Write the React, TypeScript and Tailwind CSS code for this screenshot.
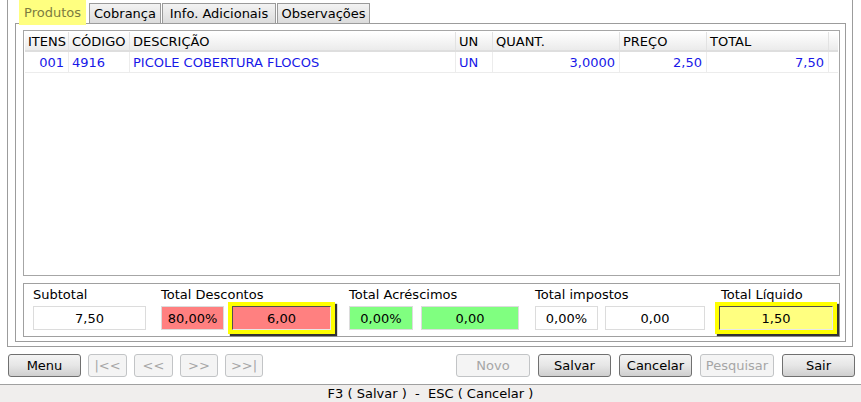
const TABS = [
  { label: "Cobrança", w: "w-[72px]" },
  { label: "Info. Adicionais", w: "w-[114px]" },
  { label: "Observações", w: "w-[93px]" },
];

const COLS = [
  { head: "ITENS", value: "001", w: "w-[44px]", right: true },
  { head: "CÓDIGO", value: "4916", w: "w-[61px]", right: false },
  { head: "DESCRIÇÃO", value: "PICOLE COBERTURA FLOCOS", w: "w-[326px]", right: false },
  { head: "UN", value: "UN", w: "w-[37px]", right: false },
  { head: "QUANT.", value: "3,0000", w: "w-[127px]", right: true },
  { head: "PREÇO", value: "2,50", w: "w-[87px]", right: true },
  { head: "TOTAL", value: "7,50", w: "w-[122px]", right: true },
];

function Field({ value, className }: { value: string; className: string }) {
  return (
    <div
      className={`h-[24px] flex items-center justify-center border border-[#dcdcdc] leading-none ${className}`}
    >
      {value}
    </div>
  );
}

function Highlight({ value, className, width }: { value: string; className: string; width: string }) {
  return (
    <div className={`${width} h-[32px] border-4 border-[#ffff00] shadow-[2px_2px_1px_#333]`}>
      <div
        className={`h-full flex items-center justify-center border-t border-l border-t-[#505050] border-l-[#505050] border-r border-b border-r-[#e8e8e8] border-b-[#e8e8e8] leading-none ${className}`}
      >
        {value}
      </div>
    </div>
  );
}

function Btn({ label, w, disabled }: { label: string; w: string; disabled?: boolean }) {
  return (
    <div
      className={
        disabled
          ? `${w} h-[23px] flex items-center justify-center rounded-[3px] border border-[#c2c4c6] bg-[#f4f4f4] text-[#a6a6a6]`
          : `${w} h-[23px] flex items-center justify-center rounded-[3px] border border-[#707070] bg-gradient-to-b from-[#f4f4f4] via-[#e6e6e6] to-[#cfcfcf] text-black`
      }
    >
      {label}
    </div>
  );
}

export default function App() {
  return (
    <div className="w-[861px] h-[402px] bg-white font-['DejaVu_Sans',sans-serif] text-[13px] text-black overflow-hidden flex flex-col">
      {/* moldura externa */}
      <div className="ml-[7px] w-[846px] h-[347px] shrink-0 border-x border-b border-[#9c9c9c] pl-[7px] pr-[6px] pb-[4px] flex flex-col">
        {/* abas */}
        <div className="h-[23px] flex items-end gap-[1px] pl-[4px]">
          <div className="relative z-10 self-start h-[25px] w-[67px] mb-[-2px] mr-[2px] bg-[#ffff80] text-[#7c7c40] flex items-start justify-center pt-[3px]">
            Produtos
          </div>
          {TABS.map((t) => (
            <div
              key={t.label}
              className={`${t.w} h-[20px] border-x border-t border-[#9a9a9a] bg-gradient-to-b from-[#f3f3f3] to-[#dcdcdc] flex items-center justify-center leading-none whitespace-nowrap`}
            >
              {t.label}
            </div>
          ))}
        </div>

        {/* painel */}
        <div className="w-[831px] h-[319px] border border-[#9c9c9c] pl-[7px] pr-[5px] pt-[6px] pb-[4px] flex flex-col gap-[7px]">
          {/* grade */}
          <div className="h-[246px] shrink-0 border border-[#a6a6a6] p-[1px]">
            <div className="flex h-[20px] bg-gradient-to-b from-white to-[#ebebeb] border-b-2 border-[#dedede]">
              {COLS.map((c) => (
                <div
                  key={c.head}
                  className={`${c.w} border-r border-[#e2e2e2] pl-[3px] flex items-center leading-none`}
                >
                  {c.head}
                </div>
              ))}
            </div>
            <div className="flex h-[21px] border-b border-[#ececec] text-[#1818e8]">
              {COLS.map((c) => (
                <div
                  key={c.head}
                  className={`${c.w} border-r border-[#ececec] flex items-center leading-none pt-[1px] ${
                    c.right ? "justify-end pr-[4px]" : "pl-[3px]"
                  }`}
                >
                  {c.value}
                </div>
              ))}
            </div>
          </div>

          {/* totais */}
          <div className="h-[54px] shrink-0 border border-[#a0a0a0] pl-[9px] pt-[2px] flex">
            <div className="flex flex-col w-[113px]">
              <div className="h-[16px] leading-[18px]">Subtotal</div>
              <div className="h-[32px] flex items-center">
                <Field value="7,50" className="w-[113px] bg-white" />
              </div>
            </div>

            <div className="flex flex-col ml-[15px]">
              <div className="h-[16px] leading-[18px]">Total Descontos</div>
              <div className="h-[32px] flex items-center gap-[4px]">
                <Field value="80,00%" className="w-[63px] bg-[#ff8080]" />
                <Highlight value="6,00" width="w-[107px]" className="bg-[#ff8080]" />
              </div>
            </div>

            <div className="flex flex-col ml-[14px]">
              <div className="h-[16px] leading-[18px]">Total Acréscimos</div>
              <div className="h-[32px] flex items-center gap-[8px]">
                <Field value="0,00%" className="w-[64px] bg-[#80ff80]" />
                <Field value="0,00" className="w-[98px] bg-[#80ff80]" />
              </div>
            </div>

            <div className="flex flex-col ml-[16px]">
              <div className="h-[16px] leading-[18px]">Total impostos</div>
              <div className="h-[32px] flex items-center gap-[7px]">
                <Field value="0,00%" className="w-[63px] bg-white" />
                <Field value="0,00" className="w-[100px] bg-white" />
              </div>
            </div>

            <div className="flex flex-col ml-[10px]">
              <div className="h-[16px] leading-[18px] pl-[6px]">Total Líquido</div>
              <div className="h-[32px] flex items-center">
                <Highlight value="1,50" width="w-[122px]" className="bg-[#ffff80]" />
              </div>
            </div>
          </div>
        </div>
      </div>

      {/* botões */}
      <div className="mt-[7px] h-[23px] shrink-0 flex justify-between pl-[8px] pr-[6px]">
        <div className="flex gap-[7px]">
          <Btn label="Menu" w="w-[73px]" />
          <Btn label="|<<" w="w-[39px]" disabled />
          <Btn label="<<" w="w-[39px]" disabled />
          <Btn label=">>" w="w-[38px]" disabled />
          <Btn label=">>|" w="w-[38px]" disabled />
        </div>
        <div className="flex gap-[8px]">
          <Btn label="Novo" w="w-[74px]" disabled />
          <Btn label="Salvar" w="w-[73px]" />
          <Btn label="Cancelar" w="w-[73px]" />
          <Btn label="Pesquisar" w="w-[74px]" disabled />
          <Btn label="Sair" w="w-[73px]" />
        </div>
      </div>

      {/* barra de status */}
      <div className="mt-[7px] h-[18px] shrink-0 border-t border-[#a0a0a0] bg-[#f0eeed] flex items-center justify-center leading-none whitespace-pre">
        {"F3 ( Salvar )  -  ESC ( Cancelar )"}
      </div>
    </div>
  );
}
